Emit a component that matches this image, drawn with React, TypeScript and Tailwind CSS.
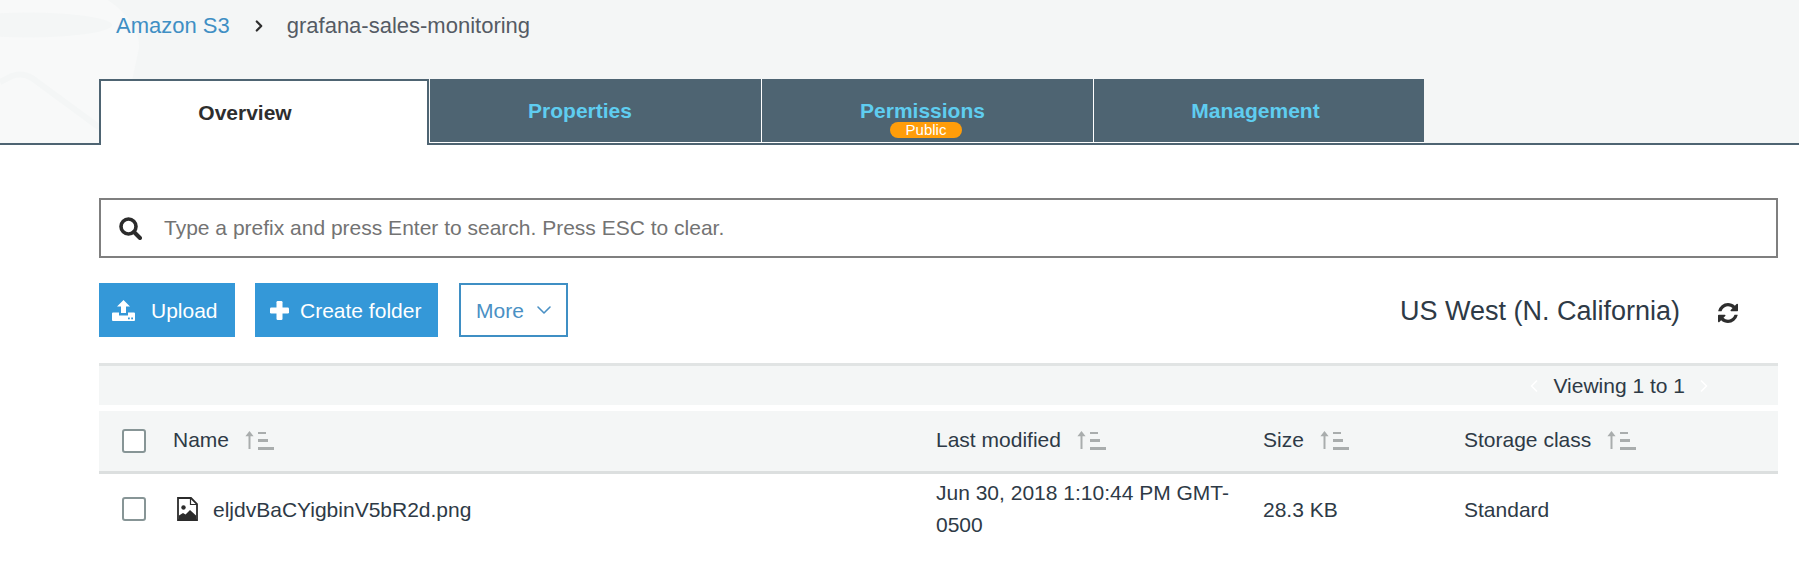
import React, { FC } from "react";
import { ChevronDown, ChevronLeft, ChevronRight } from "lucide-react";

const SortIcon: FC = () => (
  <svg width="30" height="20" viewBox="0 0 30 20" className="text-[#a9adad]" fill="currentColor">
    <path d="M4.500 1 .4 6.200H3.500V19H5.500V6.200h3.100z" />
    <rect x="13" y="2" width="8" height="2" />
    <rect x="13" y="9" width="10" height="3" />
    <rect x="13" y="17" width="16" height="3" />
  </svg>
);

const UploadIcon: FC = () => (
  <svg width="23" height="21" viewBox="0 0 23 21" fill="currentColor">
    <path d="M11.500 0 5 6.500h4V13h5V6.500h4z" />
    <path d="M1 12.500h6V15.500h9v-3h6a1 1 0 0 1 1 1V20a1 1 0 0 1-1 1H1a1 1 0 0 1-1-1v-6.500a1 1 0 0 1 1-1z" />
    <rect x="16" y="17.500" width="1.800" height="1.800" fill="#3498d8" />
    <rect x="19.200" y="17.500" width="1.800" height="1.800" fill="#3498d8" />
  </svg>
);

const PlusIcon: FC = () => (
  <svg width="19" height="19" viewBox="0 0 19 19" fill="currentColor">
    <rect x="6.500" y="0" width="6" height="19" rx="1.200" />
    <rect x="0" y="6.500" width="19" height="6" rx="1.200" />
  </svg>
);

const SearchIcon: FC = () => (
  <svg width="23" height="23" viewBox="0 0 23 23" fill="none" stroke="#2b2b2b">
    <circle cx="9.500" cy="9.500" r="7.500" strokeWidth="3.600" />
    <path d="M15 15l6 6" strokeWidth="4" strokeLinecap="round" />
  </svg>
);

const RefreshIcon: FC = () => (
  <svg width="20" height="20" viewBox="0 0 1536 1536" fill="currentColor">
    <path d="M1511 928q0 5-1 7-64 268-268 434.500T764 1536q-146 0-282.500-55T238 1324l-129 129q-19 19-45 19t-45-19-19-45V960q0-26 19-45t45-19h448q26 0 45 19t19 45-19 45l-137 137q71 66 161 102t187 36q134 0 250-65t186-179q11-17 53-117 8-23 30-23h192q13 0 22.500 9.500t9.500 22.500zm25-800v448q0 26-19 45t-45 19h-448q-26 0-45-19t-19-45 19-45l138-138Q969 256 768 256q-134 0-250 65T332 500q-11 17-53 117-8 23-30 23H50q-13 0-22.500-9.500T18 608v-7q65-268 270-434.500T768 0q146 0 284 55.500T1297 212l130-129q19-19 45-19t45 19 19 45z" />
  </svg>
);

const ImageFileIcon: FC = () => (
  <svg width="21" height="24" viewBox="0 0 21 24" className="text-[#2b2b2b]">
    <path d="M1 1h13l6 6v16H1z" fill="#fff" stroke="currentColor" strokeWidth="1.800" />
    <path d="M13.500 1v6.500H20" fill="none" stroke="currentColor" strokeWidth="1.200" />
    <circle cx="6.500" cy="10.500" r="2.200" fill="currentColor" />
    <path d="M2 22v-3.500l4-2.500 2.500 1.500 4.500-4.500 6 5.500V22z" fill="currentColor" />
  </svg>
);

const Checkbox: FC = () => (
  <span className="block h-6 w-6 rounded-[3px] border-2 border-[#879596] bg-white" />
);

const Tab: FC<{ label: string; className: string; badge?: string }> = ({ label, className, badge }) => (
  <div
    className={`relative flex h-[64px] items-center justify-center border-r border-b border-white bg-[#4e6472] text-[21px] font-bold text-[#5fcdf0] last:border-r-0 ${className}`}
  >
    {label}
    {badge && (
      <span className="absolute bottom-[4px] left-[128px] flex h-4 w-[72px] items-center justify-center rounded-lg bg-[#ff9d0a] text-[15px] font-normal text-white">
        {badge}
      </span>
    )}
  </div>
);

const HeaderCell: FC<{ label: string }> = ({ label }) => (
  <div className="flex items-center gap-[16px] pb-[2px]">
    {label}
    <SortIcon />
  </div>
);

export default function App() {
  return (
    <div className="h-[576px] w-[1799px] overflow-hidden bg-white font-['Liberation_Sans',Arial,sans-serif] text-[21px] text-[#2e3a46]">
      <div className="relative h-[145px] overflow-hidden bg-[#f4f6f6]">
        <svg className="absolute left-0 top-0" width="145" height="145" viewBox="0 0 145 145" fill="none">
          <path d="M0 0H108Q140 22 139 48L130 90 100 145H0z" fill="#f8f9f9" />
          <ellipse cx="28" cy="25" rx="84" ry="12.500" fill="#f4f6f6" />
          <path d="M0 82 12 76Q22 72 32 78L100 128" stroke="#f4f6f6" strokeWidth="6" />
        </svg>
        <div className="relative flex h-[79px] items-start pl-[116px] pt-[12px] text-[22px] leading-[27px]">
          <span className="text-[#3f8fc4]">Amazon S3</span>
          <ChevronRight className="ml-[20px] mt-[5px] text-[#2e2e2e]" size={18} strokeWidth={3} />
          <span className="ml-[19px] text-[#545b64]">grafana-sales-monitoring</span>
        </div>
        <div className="relative flex h-[66px] items-start border-b-2 border-[#4e6472] pl-[99px]">
          <div className="z-10 mr-[1px] flex h-[66px] w-[330px] items-center justify-center border-2 border-b-0 border-[#4e6472] bg-white pb-[1px] pr-[38px] text-[21px] font-bold text-[#2e2e2e]">
            Overview
          </div>
          <Tab label="Properties" className="w-[332px] pr-[31px]" />
          <Tab label="Permissions" className="w-[332px] pr-[10px]" badge="Public" />
          <Tab label="Management" className="w-[330px] pr-[7px]" />
        </div>
      </div>

      <div className="pl-[99px] pr-[21px] pt-[53px]">
        <div className="flex h-[60px] items-center gap-[22px] border-2 border-[#7f7f7f] pl-[18px] text-[#737373]">
          <SearchIcon />
          <span>Type a prefix and press Enter to search. Press ESC to clear.</span>
        </div>

        <div className="mt-[25px] flex h-[54px] items-center">
          <button className="flex h-[54px] w-[136px] items-center gap-[16px] bg-[#3498d8] pl-[13px] text-white">
            <UploadIcon />
            <span className="pt-[2px]">Upload</span>
          </button>
          <button className="ml-[20px] flex h-[54px] w-[183px] items-center gap-[11px] bg-[#3498d8] pl-[15px] text-white">
            <PlusIcon />
            <span className="pt-[2px]">Create folder</span>
          </button>
          <button className="ml-[21px] flex h-[54px] w-[109px] items-center gap-[8px] border-2 border-[#3f8fc4] pl-[15px] text-[#4a90c4]">
            <span className="pt-[2px]">More</span>
            <ChevronDown size={24} strokeWidth={1.6} />
          </button>
          <span className="ml-auto pt-[2px] text-[27px] text-[#2e3a46]">US West (N. California)</span>
          <span className="ml-[38px] mr-[40px] pt-[6px] text-[#2e2e2e]">
            <RefreshIcon />
          </span>
        </div>

        <div className="mt-[26px] flex h-[42px] items-center justify-end border-t-[3px] border-[#e1e4e4] bg-[#f4f6f6] pr-[64px]">
          <ChevronLeft className="mr-[9px] text-white" size={20} />
          <span>Viewing 1 to 1</span>
          <ChevronRight className="ml-[9px] text-white" size={20} />
        </div>

        <div className="mt-[6px] grid h-[63px] grid-cols-[74px_763px_327px_201px_1fr] items-center border-b-[3px] border-[#dcdfdf] bg-[#f4f6f6]">
          <div className="pl-[23px]">
            <Checkbox />
          </div>
          <HeaderCell label="Name" />
          <HeaderCell label="Last modified" />
          <HeaderCell label="Size" />
          <HeaderCell label="Storage class" />
        </div>

        <div className="grid h-[70px] grid-cols-[74px_763px_327px_201px_1fr] items-center">
          <div className="pl-[23px]">
            <Checkbox />
          </div>
          <div className="flex items-center gap-[15px] pl-[4px]">
            <ImageFileIcon />
            <span className="pt-[2px]">eljdvBaCYigbinV5bR2d.png</span>
          </div>
          <div className="w-[300px] leading-[32px]">Jun 30, 2018 1:10:44 PM GMT-0500</div>
          <div className="pt-[2px]">28.3 KB</div>
          <div className="pt-[2px]">Standard</div>
        </div>
      </div>
    </div>
  );
}
